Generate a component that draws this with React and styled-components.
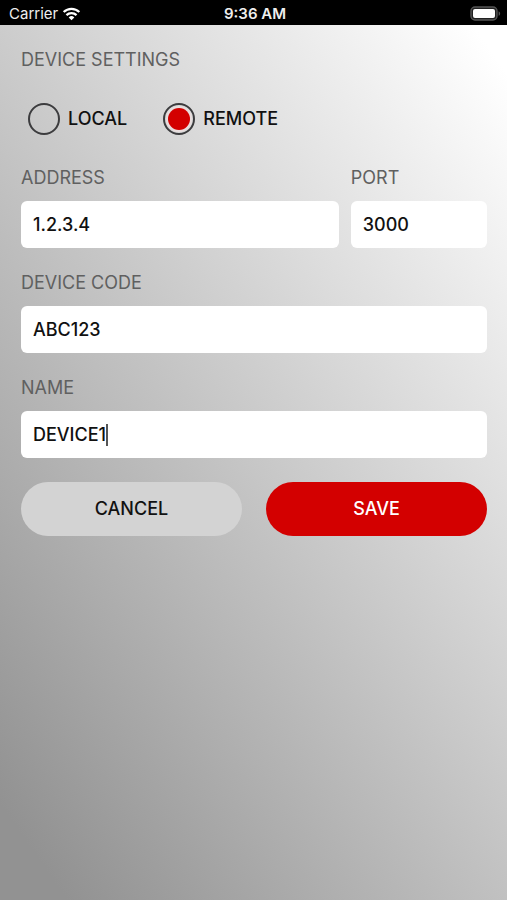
import { useState } from 'react'
import styled, { createGlobalStyle } from 'styled-components'

const GlobalStyle = createGlobalStyle`
  * {
    box-sizing: border-box;
  }

  body {
    margin: 0;
    font-family: Inter, "Liberation Sans", sans-serif;
    font-size: 18px;
    line-height: 22px;
    color: #111;
  }
`

const Screen = styled.div`
  display: flex;
  flex-direction: column;
  min-height: 100vh;
`

const StatusBar = styled.header`
  display: grid;
  grid-template-columns: 1fr auto 1fr;
  align-items: center;
  height: 25px;
  padding: 2px 6px 0 9px;
  background: #000;
  color: #eee;
  font-size: 15px;
`

const Carrier = styled.div`
  display: flex;
  align-items: center;
  gap: 4px;
`

const Time = styled.time`
  font-weight: 600;
`

const Battery = styled.svg`
  justify-self: end;
`

const Form = styled.form`
  flex: 1;
  display: flex;
  flex-direction: column;
  gap: 24px;
  padding: 24px 20px 24px 21px;
  background: linear-gradient(235deg, #fff 3%, #929292 94%);
`

const Title = styled.h1`
  margin: 0;
  font-size: 18px;
  font-weight: 400;
  color: #606060;
`

const RadioRow = styled.div`
  display: flex;
  gap: 36px;
  padding: 8px 7px;
`

const RadioLabel = styled.label`
  display: flex;
  align-items: center;
  gap: 8px;
  font-weight: 500;
`

const Radio = styled.input`
  appearance: none;
  display: grid;
  place-items: center;
  width: 32px;
  height: 32px;
  margin: 0;
  border: 2px solid #3c3c3e;
  border-radius: 50%;

  &:checked::before {
    content: '';
    width: 22px;
    height: 22px;
    border-radius: 50%;
    background: #d30000;
    box-shadow: 0 0 0 2px #eadede;
  }
`

const FieldRow = styled.div`
  display: grid;
  grid-template-columns: 7fr 3fr;
  gap: 12px;
`

const FieldGroup = styled.div`
  display: flex;
  flex-direction: column;
  gap: 12px;
  min-width: 0;
`

const FieldLabel = styled.label`
  color: #606060;
`

const FieldBox = styled.div`
  display: flex;
  align-items: center;
  height: 47px;
  padding: 0 12px;
  border-radius: 6px;
  background: #fff;
`

const Input = styled.input`
  flex: ${({ $active }) => $active ? '0 1 auto' : '1'};
  field-sizing: ${({ $active }) => $active ? 'content' : 'fixed'};
  min-width: 0;
  padding: 0;
  border: 0;
  outline: 0;
  background: transparent;
  color: #111;
  font: inherit;
  font-weight: 500;
  caret-color: transparent;
`

const Caret = styled.span`
  width: 2px;
  height: 22px;
  background: #555;
`

const Actions = styled.div`
  display: grid;
  grid-template-columns: 1fr 1fr;
  gap: 24px;
`

const Button = styled.button`
  height: 54px;
  border: 0;
  border-radius: 27px;
  background: ${({ $primary }) => $primary ? '#d30000' : '#d3d3d3'};
  color: ${({ $primary }) => $primary ? '#fff' : '#111'};
  font: inherit;
  font-weight: 500;
`

const Field = ({ id, label, value, onChange, active }) => {
  return (
    <FieldGroup>
      <FieldLabel htmlFor={id}>{label}</FieldLabel>
      <FieldBox>
        <Input id={id} name={id} value={value} onChange={onChange} $active={active} />
        {active && <Caret />}
      </FieldBox>
    </FieldGroup>
  )
}

const App = () => {
  const [mode, setMode] = useState('remote')
  const [device, setDevice] = useState({
    address: '1.2.3.4',
    port: '3000',
    code: 'ABC123',
    name: 'DEVICE1'
  })

  const update = (e) => setDevice({ ...device, [e.target.name]: e.target.value })

  return (
    <Screen>
      <GlobalStyle />
      <StatusBar>
        <Carrier>
          Carrier
          <svg width="19" height="14" viewBox="0 0 20 15" fill="none" stroke="#fff" strokeWidth="2.4">
            <path d="M1.6 5.4a12 12 0 0 1 16.8 0" />
            <path d="M4.6 8.7a7.6 7.6 0 0 1 10.8 0" />
            <path d="M10 14.2l-3-3a4.3 4.3 0 0 1 6 0z" fill="#fff" stroke="none" />
          </svg>
        </Carrier>
        <Time>9:36 AM</Time>
        <Battery width="31" height="15" viewBox="0 0 31 15">
          <rect x="1" y="1" width="26" height="13" rx="4" fill="#222" stroke="#555" strokeWidth="1.4" />
          <rect x="3" y="3" width="22" height="9" rx="2" fill="#fff" />
          <path d="M28.6 5.2c2 .8 2 3.8 0 4.6z" fill="#555" />
        </Battery>
      </StatusBar>
      <Form onSubmit={(e) => e.preventDefault()}>
        <Title>DEVICE SETTINGS</Title>
        <RadioRow>
          <RadioLabel>
            <Radio type="radio" name="mode" checked={mode === 'local'} onChange={() => setMode('local')} />
            LOCAL
          </RadioLabel>
          <RadioLabel>
            <Radio type="radio" name="mode" checked={mode === 'remote'} onChange={() => setMode('remote')} />
            REMOTE
          </RadioLabel>
        </RadioRow>
        <FieldRow>
          <Field id="address" label="ADDRESS" value={device.address} onChange={update} />
          <Field id="port" label="PORT" value={device.port} onChange={update} />
        </FieldRow>
        <Field id="code" label="DEVICE CODE" value={device.code} onChange={update} />
        <Field id="name" label="NAME" value={device.name} onChange={update} active />
        <Actions>
          <Button type="button">CANCEL</Button>
          <Button type="submit" $primary>SAVE</Button>
        </Actions>
      </Form>
    </Screen>
  )
}

export default App
